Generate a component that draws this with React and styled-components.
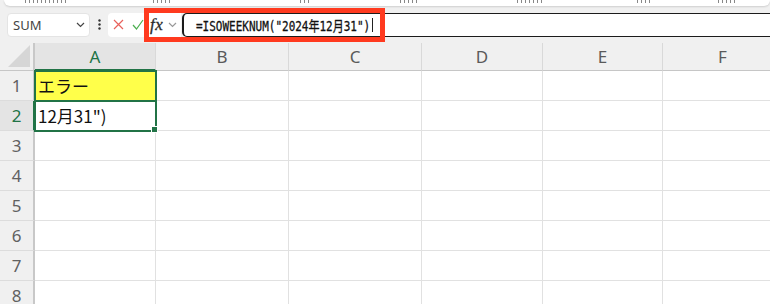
import React from 'react';
import styled, { createGlobalStyle } from 'styled-components';

const GlobalStyle = createGlobalStyle`
  html, body {
    margin: 0;
    padding: 0;
    background: #f0f0f0;
    overflow: hidden;
  }
  body {
    font-family: "Noto Sans", "Noto Sans CJK JP", sans-serif;
  }
`;

const green = '#217346';

const Page = styled.div`
  width: 770px;
  height: 304px;
  overflow: hidden;
  background: #f0f0f0;
`;

const Ribbon = styled.div`
  height: 6px;
  margin-left: 4px;
  background: #fff;
  border-radius: 0 0 8px 8px;
  box-shadow: 0 1px 2px rgba(0, 0, 0, 0.14);
  display: flex;
  align-items: flex-start;
`;

const RibbonStub = styled.span`
  margin-left: ${(p) => p.$gap}px;
  width: ${(p) => p.$w}px;
  height: 3px;
  background: repeating-linear-gradient(90deg, #6a6a6a 0 1px, transparent 1px 4px);
  opacity: 0.8;
`;

const FormulaBar = styled.div`
  position: relative;
  display: flex;
  align-items: center;
  height: 37px;
  padding-left: 7px;
`;

const NameBox = styled.div`
  box-sizing: border-box;
  width: 83px;
  height: 24px;
  background: #fff;
  border: 1px solid #e4e4e4;
  border-radius: 4px;
  display: flex;
  align-items: center;
  justify-content: space-between;
  padding: 0 4px 0 5px;
  font-size: 13px;
  color: #444;
`;

const Dots = styled.div`
  width: 18px;
  display: flex;
  justify-content: center;
`;

const ActionBox = styled.div`
  box-sizing: border-box;
  width: 73px;
  height: 24px;
  background: #fff;
  border-radius: 4px 0 0 4px;
  display: flex;
  align-items: center;
  padding-left: 5px;
`;

const IconSlot = styled.div`
  width: ${(p) => p.$w}px;
  display: flex;
  align-items: center;
`;

const Fx = styled.span`
  font-family: "Liberation Serif", "DejaVu Serif", serif;
  font-style: italic;
  font-size: 17px;
  color: #2a2a2a;
  width: 18px;
  line-height: 1;
  letter-spacing: 0.5px;
  -webkit-text-stroke: 0.3px #2a2a2a;
`;

const FormulaInput = styled.div`
  flex: 1;
  box-sizing: border-box;
  height: 24px;
  margin-left: 1px;
  background: #fff;
  border: 1.5px solid #1b1b1b;
  border-left-width: 2px;
  border-right: none;
  border-radius: 5px 0 0 5px;
  display: flex;
  align-items: center;
  padding-left: 12px;
  white-space: nowrap;
`;

const FormulaText = styled.span`
  display: inline-block;
  width: 174px;
  font-family: "DejaVu Sans Mono", "Noto Sans CJK JP", monospace;
  font-size: 14px;
  color: #111;
  transform: scaleX(0.785);
  transform-origin: left center;
  -webkit-text-stroke: 0.3px #111;
`;

const Caret = styled.span`
  display: inline-block;
  width: 1px;
  height: 14px;
  background: #222;
  margin-left: 2px;
`;

const Highlight = styled.div`
  position: absolute;
  left: 144px;
  top: 2px;
  width: 241px;
  height: 34px;
  box-sizing: border-box;
  border: 5px solid #ff3a1f;
  pointer-events: none;
`;

const Sheet = styled.div`
  display: grid;
  grid-template-columns: 35px 121px 133px 133px 121px 120px 120px;
  grid-template-rows: 28px repeat(8, 30px);
  background: #fff;
`;

const Corner = styled.div`
  background: #f0f0f0;
  border-right: 2px solid #c8c8c8;
  border-bottom: 1px solid #c6c6c6;
  box-sizing: border-box;
  display: flex;
  align-items: flex-end;
  justify-content: flex-end;
  padding: 0 3px 3px 0;
`;

const ColHeader = styled.div`
  box-sizing: border-box;
  background: ${(p) => (p.$active ? '#e4e4e4' : '#f0f0f0')};
  border-right: 1px solid #d9d9d9;
  border-bottom: ${(p) => (p.$active ? `2px solid ${green}` : '1px solid #c6c6c6')};
  display: flex;
  align-items: center;
  justify-content: center;
  font-size: 17px;
  color: ${(p) => (p.$active ? green : '#5a5a5a')};
`;

const RowHeader = styled.div`
  box-sizing: border-box;
  background: ${(p) => (p.$active ? '#e4e4e4' : '#f0f0f0')};
  border-right: 2px solid ${(p) => (p.$active ? green : '#c8c8c8')};
  border-bottom: 1px solid #dcdcdc;
  display: flex;
  align-items: center;
  justify-content: center;
  font-size: 17px;
  color: ${(p) => (p.$active ? green : '#616161')};
`;

const Cell = styled.div`
  position: relative;
  box-sizing: border-box;
  background: ${(p) => p.$fill || '#fff'};
  border-right: 1px solid #e1e1e1;
  border-bottom: 1px solid #e1e1e1;
  display: flex;
  align-items: center;
  padding-left: 3px;
  font-family: "Noto Sans CJK JP", sans-serif;
  font-size: 17px;
  color: #111;
  white-space: nowrap;
  ${(p) => p.$outlined && `outline: 2px solid ${green}; outline-offset: -1px; z-index: 1;`}
`;

const FillHandle = styled.span`
  position: absolute;
  right: -3px;
  bottom: -3px;
  width: 5px;
  height: 5px;
  background: ${green};
  border: 1px solid #fff;
`;

const Chevron = ({ color = '#444', w = 9 }) => (
  <svg width={w} height="6" viewBox="0 0 9 6">
    <path d="M1 1l3.5 3.5L8 1" fill="none" stroke={color} strokeWidth="1.2" />
  </svg>
);

const columns = ['A', 'B', 'C', 'D', 'E', 'F'];
const rows = [1, 2, 3, 4, 5, 6, 7, 8];
const cellData = {
  A1: { text: 'エラー', fill: '#ffff4a', outlined: true },
  A2: { text: '12月31")', outlined: true, handle: true },
};

const ribbonStubs = [
  { gap: 21, w: 42 },
  { gap: 86, w: 20 },
  { gap: 127, w: 12 },
  { gap: 88, w: 20 },
  { gap: 97, w: 26 },
  { gap: 94, w: 13 },
  { gap: 68, w: 19 },
];

export default function App() {
  return (
    <Page>
      <GlobalStyle />
      <Ribbon>
        {ribbonStubs.map((s, i) => (
          <RibbonStub key={i} $gap={s.gap} $w={s.w} />
        ))}
      </Ribbon>
      <FormulaBar>
        <NameBox>
          <span>SUM</span>
          <Chevron />
        </NameBox>
        <Dots>
          <svg width="3" height="11" viewBox="0 0 3 11">
            <circle cx="1.5" cy="1.5" r="1.2" fill="#333" />
            <circle cx="1.5" cy="5.5" r="1.2" fill="#333" />
            <circle cx="1.5" cy="9.5" r="1.2" fill="#333" />
          </svg>
        </Dots>
        <ActionBox>
          <IconSlot $w={19}>
            <svg width="11" height="11" viewBox="0 0 11 11">
              <path d="M1 1l9 9M10 1l-9 9" stroke="#e8615b" strokeWidth="1.2" fill="none" />
            </svg>
          </IconSlot>
          <IconSlot $w={18}>
            <svg width="12" height="11" viewBox="0 0 12 11">
              <path d="M1 6l3.5 4L11 1" stroke="#4caf50" strokeWidth="1.2" fill="none" />
            </svg>
          </IconSlot>
          <Fx>fx</Fx>
          <Chevron color="#999" w={9} />
        </ActionBox>
        <FormulaInput>
          <FormulaText>=ISOWEEKNUM("2024年12月31")</FormulaText>
          <Caret />
        </FormulaInput>
        <Highlight />
      </FormulaBar>
      <Sheet>
        <Corner>
          <svg width="22" height="22" viewBox="0 0 22 22">
            <path d="M22 0V22H0Z" fill="#d6d6d6" />
          </svg>
        </Corner>
        {columns.map((c) => (
          <ColHeader key={c} $active={c === 'A'}>
            {c}
          </ColHeader>
        ))}
        {rows.map((r) => (
          <React.Fragment key={r}>
            <RowHeader $active={r === 2}>{r}</RowHeader>
            {columns.map((c) => {
              const d = cellData[c + r] || {};
              return (
                <Cell key={c} $fill={d.fill} $outlined={d.outlined}>
                  {d.text}
                  {d.handle && <FillHandle />}
                </Cell>
              );
            })}
          </React.Fragment>
        ))}
      </Sheet>
    </Page>
  );
}
